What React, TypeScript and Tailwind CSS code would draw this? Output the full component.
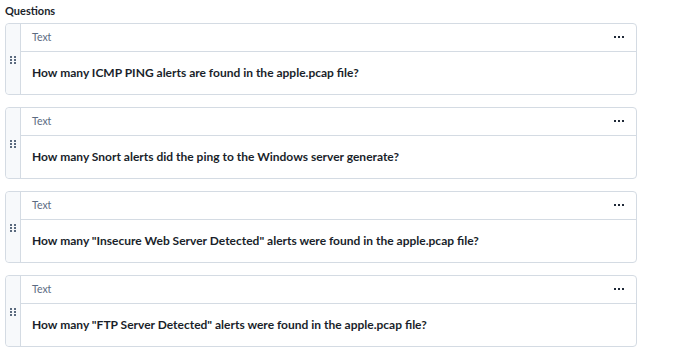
const QUESTIONS = [
  "How many ICMP PING alerts are found in the apple.pcap file?",
  "How many Snort alerts did the ping to the Windows server generate?",
  'How many "Insecure Web Server Detected" alerts were found in the apple.pcap file?',
  'How many "FTP Server Detected" alerts were found in the apple.pcap file?',
];

function DragHandle() {
  return (
    <svg width="6" height="8" viewBox="0 0 6 8" className="text-[#5a6a7e]">
      {[0, 1, 2].map((r) =>
        [0, 1].map((c) => (
          <rect key={`${r}-${c}`} x={c * 4} y={r * 3} width="2" height="2" fill="currentColor" />
        ))
      )}
    </svg>
  );
}

function MoreIcon() {
  return (
    <svg width="10" height="3" viewBox="0 0 10 3" className="text-[#1f2937]">
      <rect x="0" y="0" width="2" height="2" fill="currentColor" />
      <rect x="4" y="0" width="2" height="2" fill="currentColor" />
      <rect x="8" y="0" width="2" height="2" fill="currentColor" />
    </svg>
  );
}

export default function App() {
  return (
    <div className="w-[690px] h-[351px] bg-white px-[5px] pt-[3px] font-['Lato',sans-serif] overflow-hidden">
      <div className="text-[11px] font-bold text-[#1a1f2b] h-[20px] leading-[15px]">Questions</div>
      <div className="flex flex-col gap-[12px] w-[632px]">
        {QUESTIONS.map((q, i) => (
          <div key={i} className="flex h-[72px] border border-[#d4dbe3] rounded-[4px] bg-white">
            <div className="w-[15px] shrink-0 bg-[#f7f9fb] border-r border-[#d4dbe3] rounded-l-[4px] flex justify-center pt-[32px]">
              <DragHandle />
            </div>
            <div className="flex-1 flex flex-col">
              <div className="h-[28px] flex items-center justify-between pl-[11px] pr-[12px] border-b border-[#d4dbe3]">
                <span className="text-[10.5px] text-[#5b6b82]">Text</span>
                <MoreIcon />
              </div>
              <div className="flex-1 flex items-center pl-[11px]">
                <span className="text-[12px] font-bold text-[#1a1f2b]">{q}</span>
              </div>
            </div>
          </div>
        ))}
      </div>
    </div>
  );
}
